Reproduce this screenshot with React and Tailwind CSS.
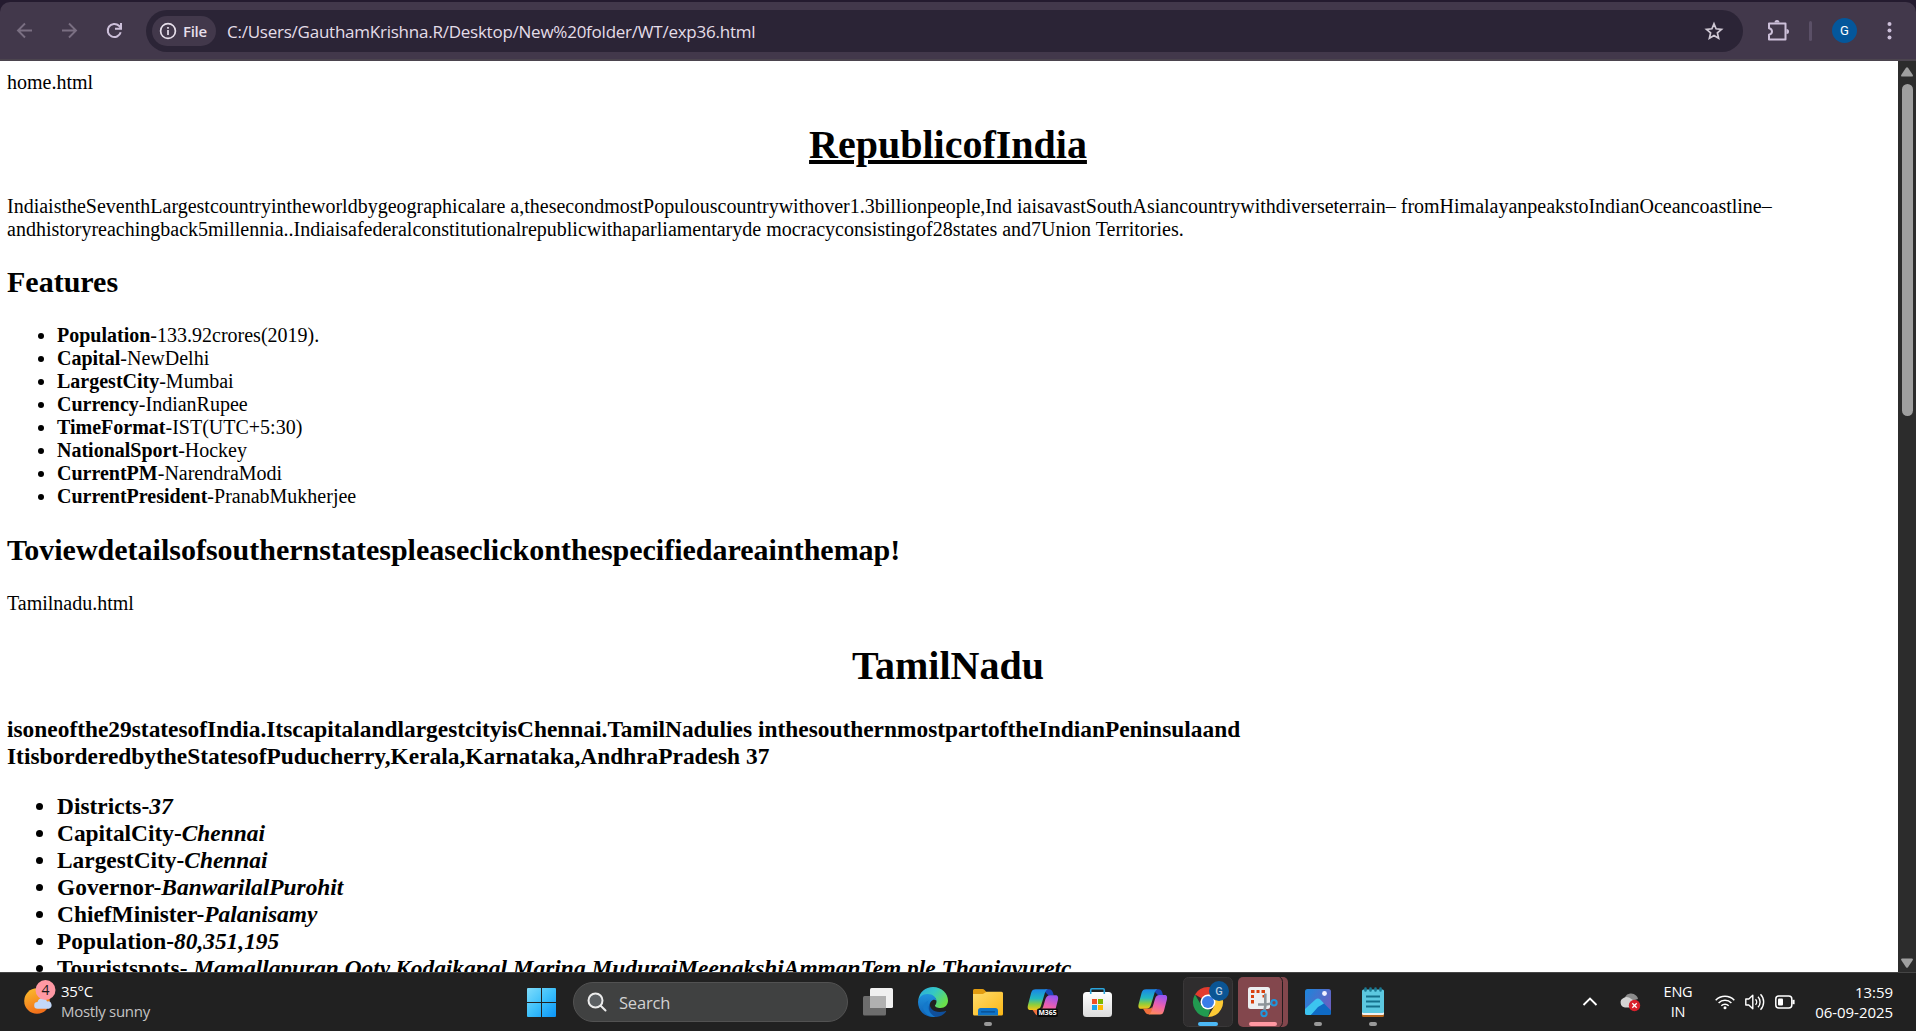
import React from "react";

const features = [
  ["Population", "-133.92crores(2019)."],
  ["Capital", "-NewDelhi"],
  ["LargestCity", "-Mumbai"],
  ["Currency", "-IndianRupee"],
  ["TimeFormat", "-IST(UTC+5:30)"],
  ["NationalSport", "-Hockey"],
  ["CurrentPM", "-NarendraModi"],
  ["CurrentPresident", "-PranabMukherjee"],
];

const stateFacts = [
  ["Districts-", "37"],
  ["CapitalCity-", "Chennai"],
  ["LargestCity-", "Chennai"],
  ["Governor-", "BanwarilalPurohit"],
  ["ChiefMinister-", "Palanisamy"],
  ["Population-", "80,351,195"],
  ["Touristspots- ", "Mamallapuran,Ooty,Kodaikanal,Marina,MuduraiMeenakshiAmmanTem ple,Thanjavuretc"],
];

function Toolbar() {
  return (
    <header className="h-[61px] shrink-0 bg-[#241b2f] pt-[2px] font-['Open_Sans',sans-serif]">
      <div className="flex h-[59px] items-start rounded-t-[10px] border-b-2 border-[#4b444e] bg-[#42384b] pt-2">
        <svg className="ml-[13px] h-[42px] w-6 shrink-0" viewBox="0 0 24 42" fill="none" stroke="#7a6f82" strokeWidth="1.9">
          <path d="M19 20.5H5M12 13.5l-7 7 7 7" />
        </svg>
        <svg className="ml-[20px] h-[42px] w-6 shrink-0" viewBox="0 0 24 42" fill="none" stroke="#7a6f82" strokeWidth="1.9">
          <path d="M5 20.5h14M12 13.5l7 7-7 7" />
        </svg>
        <svg className="ml-[21px] h-[42px] w-6 shrink-0" viewBox="0 0 24 42" fill="none" stroke="#cdc0da" strokeWidth="2">
          <path d="M18.700 22.300A6.600 6.600 0 1 1 17 15.800L19 18" />
          <path d="M19 13v5.800h-6" />
        </svg>
        <div className="ml-[20px] flex h-[42px] w-[1597px] shrink-0 items-center rounded-full bg-[#2b2436] pl-[6px]">
          <div className="flex h-[30px] w-16 items-center rounded-full bg-[#42384b] pl-[7px]">
            <svg className="h-[18px] w-[18px]" viewBox="0 0 18 18" fill="none" stroke="#e6dfea">
              <circle cx="9" cy="9" r="7.400" strokeWidth="1.700" />
              <path d="M9 8v5M9 5v1.700" strokeWidth="1.700" />
            </svg>
            <span className="ml-[6px] pb-px text-[15px] font-semibold leading-5 tracking-[-0.3px] text-[#e6dfea]">File</span>
          </div>
          <span className="ml-[11px] whitespace-nowrap pt-px text-[17px] leading-6 tracking-[-0.24px] text-[#e4dde8]">
            C:/Users/GauthamKrishna.R/Desktop/New%20folder/WT/exp36.html
          </span>
          <svg className="ml-auto mr-[19px] h-5 w-5" viewBox="0 0 20 20" fill="none" stroke="#cfc8d4" strokeWidth="1.700">
            <path d="M10 2.800l2.100 5 5.400.5-4.100 3.600 1.200 5.300L10 14.400l-4.600 2.800 1.200-5.300L2.500 8.300l5.400-.5z" />
          </svg>
        </div>
        <svg className="ml-[23px] h-[42px] w-6 shrink-0" viewBox="0 0 24 42" fill="none" stroke="#cdc0da" strokeWidth="2">
          <path d="M3 13.500h16.500v16H3v-4.800c4-1 4-5.500 0-6.400z" strokeLinejoin="round" />
          <path d="M8.500 12.500a2.500 2.500 0 0 1 5 0zM20.500 19a2.500 2.500 0 0 1 0 5z" fill="#cdc0da" stroke="none" />
        </svg>
        <div className="ml-[19px] mt-[11px] h-5 w-[3px] shrink-0 rounded-full bg-[#5b5067]" />
        <div className="ml-[20px] mt-2 flex h-[25px] w-[25px] shrink-0 items-center justify-center rounded-full bg-[#04579b] font-[Roboto,sans-serif] text-[13px] text-white">
          G
        </div>
        <svg className="ml-[20px] h-[42px] w-6 shrink-0" viewBox="0 0 24 42" fill="#cdc0da">
          <circle cx="12.500" cy="14" r="2" />
          <circle cx="12.500" cy="20.600" r="2" />
          <circle cx="12.500" cy="27.500" r="2" />
        </svg>
      </div>
    </header>
  );
}

function Page() {
  return (
    <main className="min-w-0 flex-1 overflow-hidden whitespace-nowrap bg-white pl-[7px] pr-[9px] pt-[10px] font-['Liberation_Serif',serif] text-[20px] leading-[23px] text-black">
      <div>home.html</div>
      <h1 className="mb-[27px] mt-[28px] text-center text-[40px] font-bold leading-[46px] underline">RepublicofIndia</h1>
      <p>
        IndiaistheSeventhLargestcountryintheworldbygeographicalare a,thesecondmostPopulouscountrywithover1.3billionpeople,Ind iaisavastSouthAsiancountrywithdiverseterrain– fromHimalayanpeakstoIndianOceancoastline–
        <br />
        andhistoryreachingback5millennia..Indiaisafederalconstitutionalrepublicwithaparliamentaryde mocracyconsistingof28states and7Union Territories.
      </p>
      <h2 className="mb-[25px] mt-[24px] text-[30px] font-bold leading-[34px]">Features</h2>
      <ul className="list-disc pl-[50px]">
        {features.map(([name, value]) => (
          <li key={name}>
            <b>{name}</b>
            {value}
          </li>
        ))}
      </ul>
      <h2 className="my-[25px] text-[30px] font-bold leading-[34px]">
        Toviewdetailsofsouthernstatespleaseclickonthespecifiedareainthemap!
      </h2>
      <div>Tamilnadu.html</div>
      <h1 className="mb-[27px] mt-[28px] text-center text-[40px] font-bold leading-[46px]">TamilNadu</h1>
      <div className="text-[23.4px] font-bold leading-[27px]">
        <h3>
          isoneofthe29statesofIndia.ItscapitalandlargestcityisChennai.TamilNadulies inthesouthernmostpartoftheIndianPeninsulaand
          <br />
          ItisborderedbytheStatesofPuducherry,Kerala,Karnataka,AndhraPradesh 37
        </h3>
        <ul className="mt-[23px] list-disc pl-[50px]">
          {stateFacts.map(([name, value]) => (
            <li key={name}>
              {name}
              <i>{value}</i>
            </li>
          ))}
        </ul>
      </div>
    </main>
  );
}

function Scrollbar() {
  return (
    <aside className="flex w-[18px] shrink-0 flex-col items-center bg-[#2c2c2c] pt-[6px]">
      <svg className="h-[10px] w-3" viewBox="0 0 12 10" fill="#9f9f9f">
        <path d="M5 .8q1-1.200 2 0l4.800 7.200q.5 1.600-1 1.600H1.200q-1.500 0-1-1.600z" />
      </svg>
      <div className="mt-[7px] h-[332px] w-[11px] rounded-full bg-[#9f9f9f]" />
      <svg className="mb-[4px] mt-auto h-[10px] w-3" viewBox="0 0 12 10" fill="#9f9f9f">
        <path d="M5 9.200q1 1.200 2 0l4.800-7.200q.5-1.600-1-1.600H1.200q-1.500 0-1 1.600z" />
      </svg>
    </aside>
  );
}

function Slot({ children }) {
  return (
    <svg className="h-[58px] w-[55px] shrink-0" viewBox="0 1 55 58">
      {children}
    </svg>
  );
}

function Ribbon({ id }) {
  return (
    <>
      <defs>
        <linearGradient id={id + "a"} x1="0" y1="0" x2="0" y2="1">
          <stop offset="0" stopColor="#1a86e8" />
          <stop offset=".45" stopColor="#22b8c0" />
          <stop offset=".75" stopColor="#8fce3a" />
          <stop offset="1" stopColor="#f5c518" />
        </linearGradient>
        <linearGradient id={id + "b"} x1=".6" y1="0" x2=".3" y2="1">
          <stop offset="0" stopColor="#9a55f0" />
          <stop offset=".5" stopColor="#ec5fb0" />
          <stop offset="1" stopColor="#ff8a5c" />
        </linearGradient>
      </defs>
      <path d="M30 17.200h3.500c2 0 3 1.300 3.600 3l1 3h-5l-4-4z" fill="#1b46b8" />
      <path d="M21 17.200h11.500c-2 .8-2.600 2.500-3.200 4.500l-3.300 11c-.8 2.500-2 4-4.500 4H16c-2.500 0-3-2-2.400-4.500l3-11.500c.8-2.500 2-3.500 4.400-3.500z" fill={`url(#${id}a)`} />
      <path d="M18 36.700h5c2 0 3.500-.7 4.600-2.500l-1 6.300-2 1.800c-2.500 0-4-.8-4.800-2.800z" fill="#f0703c" />
      <path d="M35 42.400H23.500c2-.8 2.600-2.500 3.200-4.500l3.300-11c.8-2.500 2-4 4.500-4H39.500c2.500 0 3 2 2.400 4.500l-3 11.500c-.8 2.500-1.600 3.500-3.900 3.500z" fill={`url(#${id}b)`} />
    </>
  );
}

function TaskIcons() {
  return (
    <div className="ml-[2px] flex">
      <Slot>
        <rect x="20" y="16" width="23" height="20" rx="1.500" fill="#f0f0f0" />
        <rect x="13" y="24" width="23" height="19.500" rx="1.500" fill="#777" opacity=".88" />
        <path d="M20 24h16v12H20z" fill="#b0b0b0" />
      </Slot>
      <Slot>
        <defs>
          <linearGradient id="edgeTop" x1="0" y1="0" x2="1" y2=".6">
            <stop offset="0" stopColor="#2aa7e0" />
            <stop offset=".5" stopColor="#35c8c4" />
            <stop offset="1" stopColor="#6ae04a" />
          </linearGradient>
          <linearGradient id="edgeLow" x1="0" y1="0" x2="0" y2="1">
            <stop offset="0" stopColor="#1f93dd" />
            <stop offset="1" stopColor="#0f5fb5" />
          </linearGradient>
        </defs>
        <path d="M13.300 28C14.500 20 20.500 15 28 15c9 0 15 6.500 15 13.500 0 4.500-3 7.500-7.500 7.500-3.500 0-5.800-1.400-5.500-2.500.3-.8 1.500-1.400 1.500-4C31.500 26 28 23 23 23c-4 0-7.500 2-9.700 5z" fill="url(#edgeTop)" />
        <path d="M13 30c0-4.500 4.500-8 9.500-8 5.500 0 9 3.400 9 7-1-1.300-2.500-1.500-4-.8-2 1-3 3.300-2.700 6 .5 5 6 8.500 13 6.500C35.500 43.500 32 45 28 45c-8.500 0-15-6.500-15-15z" fill="url(#edgeLow)" />
        <path d="M23.500 28.500c-3 5 0 13.500 7 16.300C20 46 12.800 33 23.500 28.500z" fill="#1479cb" />
        <path d="M25 31c-1 6 4.500 10.500 14 8.500 1-.2 2-.8 2.200 0C38.500 43.500 34 45 30.500 44.700 25 42.500 22 36 25 31z" fill="#0f4f9b" />
      </Slot>
      <Slot>
        <defs>
          <linearGradient id="folder" x1="0" y1="0" x2="1" y2="1">
            <stop offset="0" stopColor="#ffdc6b" />
            <stop offset="1" stopColor="#fbb716" />
          </linearGradient>
        </defs>
        <path d="M13 18.500q0-1.500 1.500-1.500h8q1.200 0 2 1l2 2v4H13z" fill="#e29c10" />
        <path d="M13 22h10l3.500-2.200H41.500q1.500 0 1.500 1.500V42q0 1.500-1.500 1.500h-27Q13 43.500 13 42z" fill="url(#folder)" />
        <path d="M18 43.500v-4.800q0-2.700 2.700-2.700h14.600q2.700 0 2.700 2.700v4.800z" fill="#0f74c8" />
        <path d="M21.500 39.800h13" stroke="#084b8a" strokeWidth="1.300" strokeLinecap="round" />
        <rect x="24" y="50" width="8" height="4" rx="2" fill="#999" />
      </Slot>
      <Slot>
        <g transform="translate(-1.500 -1) scale(1.060)">
          <Ribbon id="m" />
        </g>
        <rect x="22" y="36.500" width="21" height="8.500" rx="2" fill="#0b0b0b" />
        <text x="32.500" y="43.300" textAnchor="middle" fontFamily="Open Sans" fontWeight="700" fontSize="6.800" fill="#fff">M365</text>
      </Slot>
      <Slot>
        <defs>
          <linearGradient id="bag" x1="0" y1="0" x2="0" y2="1">
            <stop offset="0" stopColor="#fff" />
            <stop offset="1" stopColor="#dcdcdc" />
          </linearGradient>
        </defs>
        <rect x="13" y="20" width="29" height="25" rx="3.500" fill="url(#bag)" />
        <path d="M20.700 22v-4q0-1.200 1.200-1.200h11.200q1.200 0 1.200 1.200v4" fill="none" stroke="#2aa5dc" strokeWidth="1.600" />
        <path d="M22 27h5v5h-5z" fill="#f04e23" />
        <path d="M28 27h5v5h-5z" fill="#7cb800" />
        <path d="M22 33h5v5h-5z" fill="#1aa3ec" />
        <path d="M28 33h5v5h-5z" fill="#fdb900" />
      </Slot>
      <Slot>
        <Ribbon id="c" />
      </Slot>
      <Slot>
        <rect x="3.500" y="5.500" width="49" height="49" rx="5" fill="#2f2d2e" stroke="#3a3839" />
        <path d="M28 30L15 22.500A15 15 0 0 1 41 22.500z" fill="#e33b2e" />
        <path d="M28 30V22.500h13A15 15 0 0 1 28 45l6.500-11.200z" fill="#fcc934" />
        <path d="M15 22.500l6.500 11.200L28 37.500h2.200L28 45A15 15 0 0 1 15 22.500z" fill="#219a50" />
        <circle cx="28" cy="30" r="7.500" fill="#fff" />
        <circle cx="28" cy="30" r="6" fill="#3a7de8" />
        <circle cx="39" cy="19" r="10" fill="#0b5594" />
        <text x="39" y="23" textAnchor="middle" fontFamily="Roboto" fontWeight="500" fontSize="11" fill="#b7cde2">G</text>
        <rect x="18" y="50" width="20" height="4" rx="2" fill="#4cb8f5" />
      </Slot>
      <Slot>
        <rect x="3" y="5" width="50" height="50" rx="5" fill="#83474d" />
        <path d="M44.500 5q3 1 3 4.500v41q0 3.500-3 4.500" fill="none" stroke="#241c1e" strokeWidth="1" />
        <rect x="13" y="15" width="22" height="22" rx="2.500" fill="#eceff1" />
        <path d="M16 18h3.500v3H16zM21.500 18h3v3h-3zM26.500 18H30v3h-3.500zM16 23h3v3h-3zM16 28h3v3.500h-3zM27.500 23H30v2.500h-2.500z" fill="#d8410e" />
        <path d="M30.300 21.500V34l-1 5M23 32.500h8l6-1" fill="none" stroke="#8d9499" strokeWidth="2.600" />
        <circle cx="39" cy="30.800" r="2.700" fill="none" stroke="#1f96dc" strokeWidth="2" />
        <circle cx="29" cy="41.500" r="2.700" fill="none" stroke="#1f96dc" strokeWidth="2" />
        <rect x="14" y="50" width="28" height="4" rx="2" fill="#ff98a2" />
      </Slot>
      <Slot>
        <defs>
          <linearGradient id="sky" x1="0" y1="0" x2="1" y2=".6">
            <stop offset="0" stopColor="#1b86dc" />
            <stop offset="1" stopColor="#6a5fc0" />
          </linearGradient>
        </defs>
        <rect x="15" y="17" width="26" height="26" rx="2.500" fill="url(#sky)" />
        <path d="M20 43l9-10q1.500-1.600 3 0L41 41q0 2-2 2z" fill="#0f6ac4" />
        <path d="M15 37l10.500-9.500q2.500-2 5 .3L34 31.500 21 43h-4q-2 0-2-2z" fill="#3cc4f0" />
        <circle cx="34.500" cy="21.500" r="2.400" fill="#f2f2ff" />
        <path d="M28 35L21 43h17.500q2.500 0 2.500-2v-2.500L34 31.500z" fill="#0f6ac4" />
        <rect x="24" y="50" width="8" height="4" rx="2" fill="#999" />
      </Slot>
      <Slot>
        <path d="M17 41h22v2.500q0 1.500-1.500 1.500h-19Q17 45 17 43.500z" fill="#b5651d" />
        <path d="M17 38h22v4q0 1-1.500 1h-19q-1.500 0-1.500-1z" fill="#f0f0f0" />
        <path d="M17 19q0-1.500 1.500-1.500h19q1.500 0 1.500 1.500v21q0 1-1.500 1h-19q-1.500 0-1.500-1z" fill="#5cc8e0" />
        <path d="M21 24.500h14M21 29.500h14M21 34.500h14" stroke="#14708c" strokeWidth="1.800" />
        <path d="M20.500 16.500v2M25.500 16.500v2M30.500 16.500v2M35.500 16.500v2" stroke="#1a7a94" strokeWidth="2.600" strokeLinecap="round" />
        <rect x="24" y="50" width="8" height="4" rx="2" fill="#999" />
      </Slot>
    </div>
  );
}

function Taskbar() {
  return (
    <footer className="flex h-[59px] shrink-0 items-center border-t border-[#454545] bg-[#212121] font-['Open_Sans',sans-serif] text-white">
      <svg className="ml-[22px] h-[58px] w-[36px] shrink-0" viewBox="0 1 36 58">
        <defs>
          <linearGradient id="sun" x1="0" y1="0" x2=".4" y2="1">
            <stop offset="0" stopColor="#fbc02d" />
            <stop offset="1" stopColor="#f2701a" />
          </linearGradient>
        </defs>
        <circle cx="15" cy="29" r="12.800" fill="url(#sun)" />
        <path d="M15.500 36.700a3.300 3.300 0 0 1 0-6.600 5 5 0 0 1 9.600-.6 3.700 3.700 0 0 1 1.700 7.200z" fill="#c3d8f8" />
        <circle cx="23.500" cy="18" r="10" fill="#ff99a4" />
        <text x="23.500" y="23" textAnchor="middle" fontFamily="Open Sans" fontSize="14" fill="#1a1a1a">4</text>
      </svg>
      <div className="ml-[3px] w-[120px] pb-[2px] text-[15px] leading-5 tracking-[-0.3px]">
        <div>35°C</div>
        <div className="text-[#c4c4c4]">Mostly sunny</div>
      </div>
      <svg className="ml-[346px] h-[29px] w-[29px] shrink-0" viewBox="0 0 29 29">
        <defs>
          <linearGradient id="win" x1="0" y1="0" x2="1" y2="1">
            <stop offset="0" stopColor="#7fdcfb" />
            <stop offset=".5" stopColor="#3cc0fb" />
            <stop offset="1" stopColor="#0a94f8" />
          </linearGradient>
        </defs>
        <path d="M0 1q0-1 1-1h13v14H0zM15 0h13q1 0 1 1v13H15zM0 15h14v14H1q-1 0-1-1zM15 15h14v13q0 1-1 1H15z" fill="url(#win)" />
      </svg>
      <div className="ml-[17px] flex h-10 w-[275px] shrink-0 items-center rounded-full border border-[#525252] bg-[#404141] pl-[13px]">
        <svg className="h-5 w-5" viewBox="0 0 20 20" fill="#5c6063" stroke="#ececec" strokeWidth="2" strokeLinecap="round">
          <circle cx="8.500" cy="8.500" r="7" />
          <path d="M13.700 13.700l4.800 4.800" />
        </svg>
        <span className="ml-[12px] pt-px text-[16.5px] leading-6 tracking-[-0.2px] text-[#d2d2d2]">Search</span>
      </div>
      <TaskIcons />
      <svg className="ml-[182px] h-4 w-4 shrink-0" viewBox="0 0 16 16" fill="none" stroke="#fff" strokeWidth="1.900">
        <path d="M1.500 11L8 4.500l6.500 6.500" />
      </svg>
      <svg className="ml-[21px] h-5 w-[22px] shrink-0" viewBox="0 0 22 20">
        <path d="M6 5a7 7 0 0 1 11-1.500 5 5 0 0 1 2 3.500L9 10z" fill="#8c8c8c" />
        <path d="M6 15.500A5 5 0 0 1 4.500 6 5.500 5.500 0 0 1 10 5.500l8 5-6 5z" fill="#d4d4d4" />
        <circle cx="15.500" cy="13.500" r="5.700" fill="#d8202c" />
        <path d="M13.300 11.300l4.400 4.400M17.700 11.300l-4.400 4.400" stroke="#fff" strokeWidth="1.300" />
      </svg>
      <div className="ml-[19px] w-[36px] text-center text-[14.5px] leading-5 tracking-[-0.2px]">
        <div>ENG</div>
        <div>IN</div>
      </div>
      <svg className="ml-[19px] h-4 w-5 shrink-0" viewBox="0 0 20 16" fill="none" stroke="#fff" strokeWidth="1.500">
        <path d="M.7 6.200a13 13 0 0 1 18.600 0M3.600 9a9 9 0 0 1 12.800 0M6.300 11.700a5.300 5.300 0 0 1 7.400 0" />
        <circle cx="10" cy="13.800" r="1.500" fill="#fff" stroke="none" />
      </svg>
      <svg className="ml-[10px] h-[18px] w-5 shrink-0" viewBox="0 0 20 18" fill="none" stroke="#fff" strokeWidth="1.400">
        <path d="M.8 6h3l4-3.800v13.600L3.800 12h-3z" strokeLinejoin="round" />
        <path d="M10.500 6.200a4 4 0 0 1 0 5.600M13 3.800a7.500 7.500 0 0 1 0 10.400M15.500 1.300a11 11 0 0 1 0 15.400" />
      </svg>
      <svg className="ml-[10px] h-[14px] w-5 shrink-0" viewBox="0 0 20 14" fill="none" stroke="#fff" strokeWidth="1.500">
        <rect x=".8" y="1" width="16" height="12" rx="3" />
        <path d="M18.500 4.800v4.400" strokeWidth="2.200" />
        <rect x="3" y="3.500" width="5" height="7" rx="1" fill="#fff" stroke="none" />
      </svg>
      <div className="ml-auto mr-[23px] pb-px text-right text-[15px] leading-5 tracking-[-0.05px]">
        <div>13:59</div>
        <div>06-09-2025</div>
      </div>
    </footer>
  );
}

export default function App() {
  return (
    <div className="flex h-[1031px] w-[1916px] flex-col overflow-hidden">
      <Toolbar />
      <div className="flex min-h-0 flex-1">
        <Page />
        <Scrollbar />
      </div>
      <Taskbar />
    </div>
  );
}
